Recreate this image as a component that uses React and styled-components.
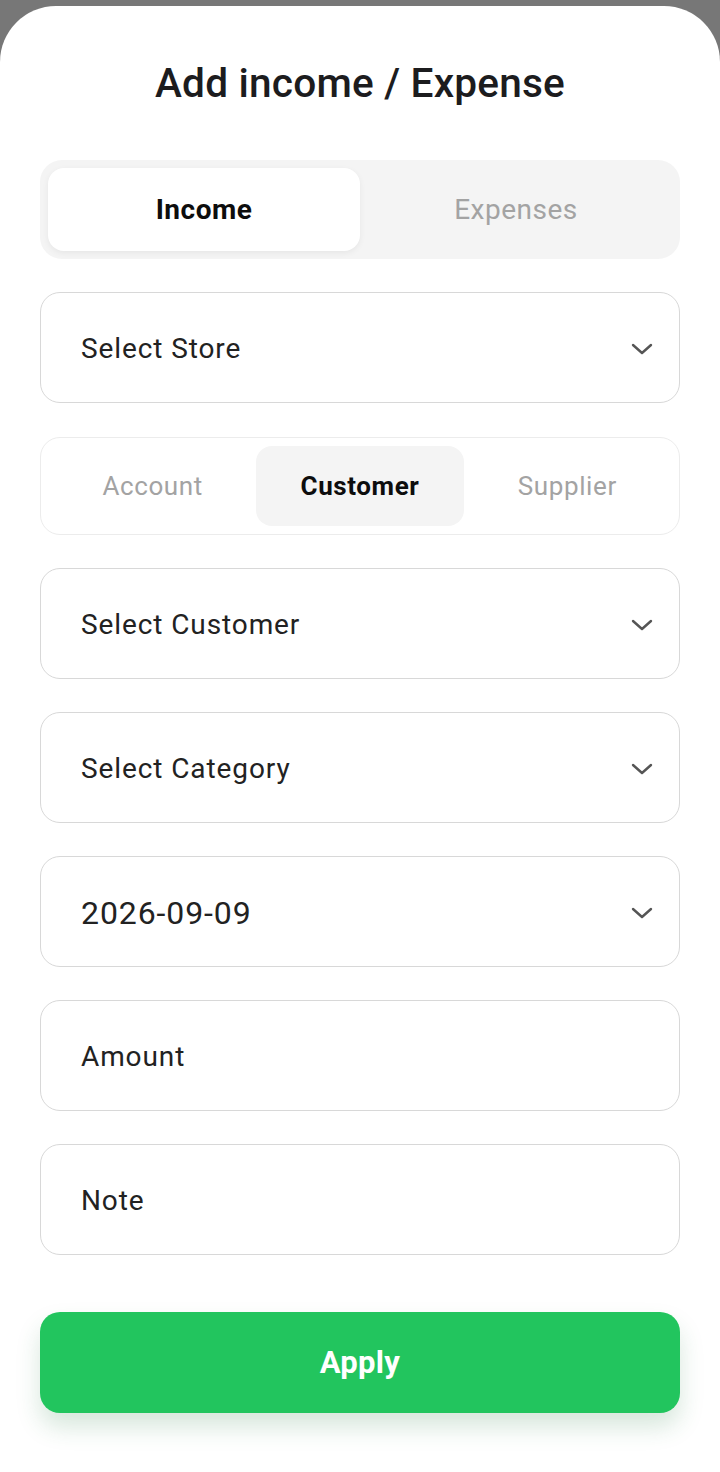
import React from "react";
import styled, { createGlobalStyle } from "styled-components";

const Global = createGlobalStyle`
  html, body { margin: 0; padding: 0; background: #777777; }
  body { font-family: Roboto, "Noto Sans", Arial, sans-serif; }
  * { box-sizing: border-box; }
`;

const Screen = styled.div`
  width: 720px;
  height: 1472px;
  background: #777777;
  padding-top: 6px;
  overflow: hidden;
`;

const Sheet = styled.div`
  background: #ffffff;
  height: 1466px;
  border-radius: 56px 56px 0 0;
  padding: 55px 40px 0;
  display: flex;
  flex-direction: column;
`;

const Title = styled.h1`
  margin: 0 0 55px;
  text-align: center;
  font-family: Roboto, sans-serif;
  font-weight: 500;
  font-size: 40.6px;
  line-height: 44px;
  color: #1c1c1e;
  letter-spacing: 0.2px;
`;

const Form = styled.div`
  display: flex;
  flex-direction: column;
  gap: 33px;
`;

const Toggle = styled.div`
  height: 99px;
  background: #f4f4f4;
  border-radius: 22px;
  padding: 8px;
  display: grid;
  grid-template-columns: 1fr 1fr;
`;

const ToggleOption = styled.div`
  display: flex;
  align-items: center;
  justify-content: center;
  border-radius: 16px;
  font-size: 28px;
  font-weight: ${(p) => (p.$active ? 700 : 400)};
  color: ${(p) => (p.$active ? "#0d0d0d" : "#a3a3a3")};
  background: ${(p) => (p.$active ? "#ffffff" : "transparent")};
  box-shadow: ${(p) => (p.$active ? "0 2px 6px rgba(0,0,0,0.06)" : "none")};
  letter-spacing: 0.5px;
`;

const Field = styled.div`
  height: 111px;
  border: 1.5px solid #d8d8d8;
  border-radius: 20px;
  padding: 2px 26px 0 40px;
  display: flex;
  align-items: center;
  justify-content: space-between;
`;

const FieldText = styled.span`
  font-size: ${(p) => (p.$large ? "32px" : "28px")};
  color: #222222;
  letter-spacing: 0.9px;
`;

const Tabs = styled.div`
  margin-top: 1px;
  height: 98px;
  border: 1.5px solid #ececec;
  border-radius: 20px;
  padding: 8px;
  display: grid;
  grid-template-columns: repeat(3, 1fr);
`;

const Tab = styled.div`
  display: flex;
  align-items: center;
  justify-content: center;
  border-radius: 16px;
  font-size: 26px;
  font-weight: ${(p) => (p.$active ? 700 : 400)};
  color: ${(p) => (p.$active ? "#0d0d0d" : "#a3a3a3")};
  background: ${(p) => (p.$active ? "#f4f4f4" : "transparent")};
  letter-spacing: 0.6px;
`;

const ApplyButton = styled.button`
  margin-top: 57px;
  height: 101px;
  width: 100%;
  border: none;
  border-radius: 20px;
  background: #22c55e;
  color: #ffffff;
  font-family: Roboto, sans-serif;
  font-size: 31px;
  font-weight: 700;
  letter-spacing: 0.3px;
  box-shadow: 0 14px 24px rgba(34, 120, 60, 0.18);
`;

const Chevron = () => (
  <svg width="22" height="12" viewBox="0 0 22 12" fill="none">
    <path d="M2 2 L11 10 L20 2" stroke="#555" strokeWidth="2.4" strokeLinecap="round" strokeLinejoin="round" />
  </svg>
);

export default function App() {
  return (
    <>
      <Global />
      <Screen>
        <Sheet>
          <Title>Add income / Expense</Title>
          <Form>
            <Toggle>
              <ToggleOption $active>Income</ToggleOption>
              <ToggleOption>Expenses</ToggleOption>
            </Toggle>
            <Field>
              <FieldText>Select Store</FieldText>
              <Chevron />
            </Field>
            <Tabs>
              <Tab>Account</Tab>
              <Tab $active>Customer</Tab>
              <Tab>Supplier</Tab>
            </Tabs>
            <Field>
              <FieldText>Select Customer</FieldText>
              <Chevron />
            </Field>
            <Field>
              <FieldText>Select Category</FieldText>
              <Chevron />
            </Field>
            <Field>
              <FieldText $large>2026-09-09</FieldText>
              <Chevron />
            </Field>
            <Field>
              <FieldText>Amount</FieldText>
            </Field>
            <Field>
              <FieldText>Note</FieldText>
            </Field>
          </Form>
          <ApplyButton>Apply</ApplyButton>
        </Sheet>
      </Screen>
    </>
  );
}
